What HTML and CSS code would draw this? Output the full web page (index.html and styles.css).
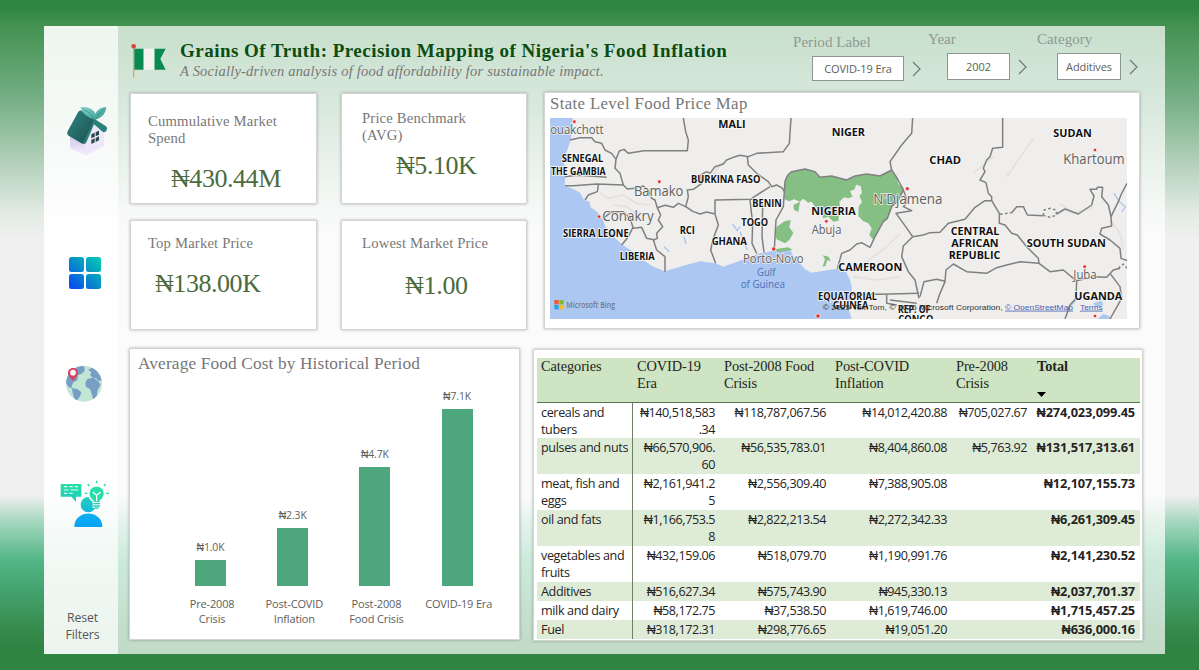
FILE: index.html
```html
<!DOCTYPE html>
<html lang="en">
<head>
<meta charset="utf-8">
<title>Grains Of Truth</title>
<link rel="stylesheet" href="styles.css">
</head>
<body>
<div class="panel">
  <nav class="sidebar">
    <svg class="ico-house" width="42" height="52" viewBox="0 0 126 156">
      <defs>
        <linearGradient id="roof" x1="0" y1="0" x2="1" y2="1"><stop offset="0" stop-color="#2f8680"/><stop offset="1" stop-color="#1b4f50"/></linearGradient>
        <linearGradient id="wall" x1="0" y1="0" x2="0" y2="1"><stop offset="0" stop-color="#cfc4ee"/><stop offset="1" stop-color="#f6f3fc"/></linearGradient>
        <linearGradient id="leaf" x1="0" y1="0" x2="1" y2="1"><stop offset="0" stop-color="#86d3c8"/><stop offset="1" stop-color="#35998d"/></linearGradient>
      </defs>
      <path d="M12 92L60 100V152L12 130Z" fill="url(#wall)"/>
      <path d="M56 112L84 52L114 78V124L58 152Z" fill="#ece7f9"/>
      <path d="M36 22Q40 14 48 17L86 42L58 112Q54 119 46 115L8 92Q1 87 5 79Z" fill="url(#roof)"/>
      <path d="M86 42L120 64Q126 69 122 76L118 80Q114 84 108 79L84 58L62 110Q58 119 50 116Z" fill="#2b807a"/>
      <path d="M88 44Q54 38 43 7Q76 2 88 26Q98 6 121 6Q120 34 88 44Z" fill="url(#leaf)"/>
      <path d="M50 11Q74 22 88 44Q100 20 116 10" fill="none" stroke="#2c8d83" stroke-width="2"/>
      <g fill="#27474c"><path d="M76 88l10-5v12l-10 5zM89 82l10-5v12l-10 5zM76 105l10-5v12l-10 5zM89 99l10-5v12l-10 5z"/></g>
    </svg>
    <svg class="ico-grid" width="32" height="32" viewBox="0 0 32 32">
      <defs><linearGradient id="gg" gradientUnits="userSpaceOnUse" x1="0" y1="32" x2="32" y2="0"><stop offset=".1" stop-color="#0750ee"/><stop offset=".5" stop-color="#078dc8"/><stop offset="1" stop-color="#06ccb0"/></linearGradient></defs>
      <g fill="url(#gg)"><rect width="15" height="15" rx="2.5"/><rect x="17" width="15" height="15" rx="2.5"/><rect y="17" width="15" height="15" rx="2.5"/><rect x="17" y="17" width="15" height="15" rx="2.5"/></g>
    </svg>
    <svg class="ico-globe" width="36" height="37" viewBox="0 0 108 111">
      <defs><clipPath id="gc"><circle cx="54" cy="56" r="54"/></clipPath></defs>
      <circle cx="54" cy="56" r="54" fill="#c2e5d6"/>
      <g fill="#779fc6" clip-path="url(#gc)">
        <path d="M0 30L18 10L40 4L55 4L56 18L45 28L36 30L34 46L22 52L16 66L24 72L8 66L0 54Z"/>
        <path d="M18 70L34 72L46 82L42 94L32 108L24 98L20 84Z"/>
        <path d="M66 14L78 8L92 16L104 34L108 46L98 48L90 40L80 38L72 30L76 22Z"/>
        <path d="M64 42L82 38L96 48L104 60L96 72L92 92L82 104L76 84L72 72L60 66L58 54Z"/>
      </g>
      <path d="M21 9c-10 0-15 7-15 15 0 9 9 14 15 25 6-11 15-16 15-25 0-8-5-15-15-15z" fill="#d9415f"/>
      <circle cx="21" cy="23" r="8.500" fill="#fff"/>
    </svg>
    <svg class="ico-idea" width="50" height="47" viewBox="0 0 150 141">
      <defs><linearGradient id="ig" gradientUnits="userSpaceOnUse" x1="0" y1="15" x2="0" y2="135"><stop offset="0" stop-color="#27e0a4"/><stop offset=".5" stop-color="#1bc4cb"/><stop offset=".8" stop-color="#0cabef"/><stop offset="1" stop-color="#07a4f5"/></linearGradient></defs>
      <path d="M2 12H64V50H48V65L34 50H2Z" fill="url(#ig)"/>
      <path d="M12 20H22M28 20H38M44 20H54M12 30H26M32 30H54M12 40H22M28 40H38" stroke="#dffaf1" stroke-width="3.500"/>
      <circle cx="85" cy="74" r="23" fill="url(#ig)"/>
      <path d="M43 141C43 87 127 87 127 141Z" fill="url(#ig)"/>
      <path d="M98 84V66C78 54 80 18 110 16C142 18 140 54 122 66V86Z" fill="#f8fdfb"/>
      <path d="M101 61C82 50 86 20 110 20C134 20 138 50 119 61V66H101Z" fill="#27dda8"/>
      <path d="M98 36L110 46L122 36M110 46V64" fill="none" stroke="#f2fffb" stroke-width="4"/>
      <path d="M100 71H120M100 78H120M104 84H116" stroke="#26cfb9" stroke-width="4"/>
      <path d="M110 2V10M83 12L88 18M137 12L132 18M74 40H82M138 40H147" stroke="#2bdba8" stroke-width="4"/>
    </svg>
    <div class="reset">Reset<br>Filters</div>
  </nav>

  <main class="main">
    <header class="header">
      <svg class="flag" width="36" height="36" viewBox="0 0 108 108">
        <path d="M8 10V104" stroke="#e0a466" stroke-width="4"/><circle cx="8" cy="10" r="7" fill="#d8453b"/>
        <path d="M10 17H38V80H10ZM70 17H104L88 48L104 80H70Z" fill="#0a8a50"/><path d="M38 17H70V80H38Z" fill="#f3f4f2"/>
      </svg>
      <div class="titles">
        <h1>Grains Of Truth: Precision Mapping of Nigeria's Food Inflation</h1>
        <p>A Socially-driven analysis of food affordability for sustainable impact.</p>
      </div>
      <div class="slicer s1"><span class="slabel">Period Label</span><div class="srow"><span class="box">COVID-19 Era</span><svg width="9" height="16" viewBox="0 0 9 16"><path d="M1 1L8 8L1 15"/></svg></div></div>
      <div class="slicer s2"><span class="slabel">Year</span><div class="srow"><span class="box green">2002</span><svg width="9" height="16" viewBox="0 0 9 16"><path d="M1 1L8 8L1 15"/></svg></div></div>
      <div class="slicer s3"><span class="slabel">Category</span><div class="srow"><span class="box">Additives</span><svg width="9" height="16" viewBox="0 0 9 16"><path d="M1 1L8 8L1 15"/></svg></div></div>
    </header>

    <section class="top">
      <div class="kpis">
        <div class="card kpi k1"><span class="kl">Cummulative Market<br>Spend</span><span class="kv">₦430.44M</span></div>
        <div class="card kpi k2"><span class="kl">Price Benchmark<br>(AVG)</span><span class="kv">₦5.10K</span></div>
        <div class="card kpi k3"><span class="kl">Top Market Price</span><span class="kv">₦138.00K</span></div>
        <div class="card kpi k4"><span class="kl">Lowest Market Price</span><span class="kv">₦1.00</span></div>
      </div>
      <div class="card mapcard">
        <h2>State Level Food Price Map</h2>
        <svg class="map" width="577" height="201" viewBox="30 84 1731 603">
          <rect x="30" y="84" width="1731" height="603" fill="#abc7f2"/>
          <path fill="#efeeec" d="M98 84L97 115L92 150L80 185L72 215L76 250L74 287L100 297L120 308L132 330L148 335L152 352L172 366L190 392L196 410L215 425L225 445L248 465L280 485L310 510L340 530L375 544L430 527L480 514L527 520L550 530L600 512L660 490L700 482L750 480L762 500L795 538L815 548L860 541L892 536L918 545L930 570L935 592L932 625L925 655L935 687H1761V84Z"/>
          <g fill="none" stroke="#e2e1de" stroke-width="5" stroke-linejoin="round"><path d="M180 310L205 325L250 315L290 340L330 345M220 345L260 350L300 380M550 215L520 250L560 260M960 530L1000 500L1040 470L1080 430M940 560L1010 570L1080 560M1360 200L1300 250M1640 600L1680 640M1480 145L1400 260M1560 340L1600 370L1660 350M1710 390L1740 430L1750 480"/></g>
          <g fill="none" stroke="#abc7f2" stroke-width="4"><path d="M578 402L592 422L600 410M432 440L438 462M372 470L388 485M600 425L612 455L622 480M1722 310L1738 335L1756 350M1745 365L1758 350M1590 650L1608 630"/></g>
          <path fill="#abc7f2" d="M1660 640L1685 632L1690 645L1668 652ZM1672 687L1690 672L1708 678L1712 687ZM885 570l15-8 4 10-12 8z"/>
          <path fill="#85bf84" d="M733 305L735 275Q740 255 755 245L795 237L825 245L840 262L875 258L920 270L945 258L980 252L1020 258L1055 240L1070 262L1075 282L1092 295L1075 330L1055 350L1042 385L1025 400L1000 450L988 435L995 415L985 400L968 392L955 378L956 350L966 335L958 318L966 308L962 288L948 284L944 298L930 304L938 320L925 325L912 322L898 335L900 350L895 392L880 395L865 380L850 385L842 360L825 350L815 335L805 338L790 326L780 335L762 328L748 334L733 328Z"/>
          <path fill="#85bf84" d="M710 410L735 393L752 390L748 412L760 428L748 450L735 460L710 448L705 430ZM703 478L745 472L758 480L715 486ZM848 496L866 500L872 514L862 510L856 528L848 530L855 508ZM760 345L780 335L775 365L762 360Z"/>
          <g fill="none" stroke="#808080" stroke-width="4.500" stroke-linejoin="round">
            <path d="M90 150L120 143L155 143L165 155L185 160L195 180L215 190L228 208L225 235L240 250L250 285L170 282L100 287L75 287M75 260L110 256L150 258L200 262"/>
            <path d="M228 208L238 183L252 178L265 190L312 182L442 182L445 150L437 125L430 84"/>
            <path d="M250 285L262 297L285 295L310 288L325 300L335 325L345 330L352 353L375 346L400 352L415 340L437 350L445 320L442 300L460 298L485 280L482 255L500 245L510 250L525 230L550 222L560 210L580 202L600 196L625 200L650 190L730 185L748 160L753 84"/>
            <path d="M622 200L625 225L650 250L685 275L695 290L710 285L728 295L733 305L730 350L708 390L703 478"/>
            <path d="M437 350L460 365L480 372L500 366L525 372L525 330L635 328L640 322L690 290M525 372L535 405L520 445L512 480L527 520"/>
            <path d="M352 353L362 375L355 390L368 410L350 430L352 445L340 450L350 480L375 500L375 545M175 285L172 305L145 315L135 330M190 385L215 365L250 365L270 385L280 415L305 412L320 445L345 450M280 410L265 440L245 465"/>
            <path d="M630 330L638 400L636 460L650 490M660 325L668 350L666 440L672 487"/>
            <path d="M733 305L735 275Q740 255 755 245L795 237L825 245L840 262L875 258L920 270L945 258L980 252L1020 258L1055 240L1070 262L1090 300L1075 330L1055 350L1042 385L1030 395L1005 440L990 472L965 458L950 462L930 480L905 490L892 536"/>
            <path d="M1118 84L1115 130L1085 165L1050 215L1055 240M1090 300L1103 335L1090 350L1115 362L1068 370L1090 400L1118 440L1090 468L1085 500L1105 545L1125 570L1137 625M1137 610L1050 612L930 614M1118 440L1150 435L1170 428L1200 427L1225 400L1275 388L1305 352L1335 332L1355 332L1378 370L1378 400L1395 405L1415 430L1432 435L1460 470L1495 505L1497 520L1440 515L1400 525L1370 533L1340 550L1280 545L1240 522L1218 540L1215 575L1200 610L1190 640M1140 620L1152 575L1190 568L1215 574M1040 615V640L1070 645M1050 630L1130 640"/>
            <path d="M1388 84V172L1358 175L1350 200L1340 210L1330 235L1335 245L1320 270L1338 278L1345 310L1355 320V332M1415 368L1430 350L1450 350L1462 375L1510 377M1550 372L1575 357L1615 372L1655 345L1662 318L1650 298L1670 298L1672 292H1688L1685 320L1705 345L1713 380L1715 408L1685 415L1680 432L1710 450L1740 475L1743 505L1761 512"/>
            <path d="M1497 520L1530 545L1570 540L1600 565L1610 572L1660 560L1700 562L1720 540L1740 535M1610 572L1608 625L1590 645L1575 687M1710 550L1740 590L1745 625L1710 687M1713 380L1735 335L1745 310L1761 280"/>
            <path stroke-dasharray="8 7" d="M1380 373L1415 368M1510 377L1512 360L1530 355L1548 360L1550 375L1530 382L1512 377M1735 535L1750 522L1761 535"/>
          </g>
          <g fill="#e03030" stroke="#fff" stroke-width="2"><circle cx="103" cy="95" r="5.500"/><circle cx="358" cy="275" r="5.500"/><circle cx="177" cy="380" r="5.500"/><circle cx="859" cy="394" r="5.500"/><circle cx="701" cy="477" r="6.500"/><circle cx="1102" cy="296" r="6"/><circle cx="1665" cy="180" r="5.500"/><circle cx="1634" cy="530" r="5.500"/><circle cx="834" cy="678" r="6.500"/><circle cx="1665" cy="678" r="5.500"/></g>
          <g class="city">
            <text x="22" y="132" textLength="169" lengthAdjust="spacingAndGlyphs">louakchott</text><text x="282" y="318" textLength="148" lengthAdjust="spacingAndGlyphs" font-size="41">Bamako</text><text x="187" y="393" textLength="154" lengthAdjust="spacingAndGlyphs" font-size="41">Conakry</text><text x="815" y="432" textLength="89" lengthAdjust="spacingAndGlyphs">Abuja</text><text x="609" y="518" textLength="182" lengthAdjust="spacingAndGlyphs">Porto-Novo</text><text x="1000" y="342" textLength="207" lengthAdjust="spacingAndGlyphs" font-size="41">N'Djamena</text><text x="1570" y="223" textLength="184" lengthAdjust="spacingAndGlyphs" font-size="41">Khartoum</text><text x="1600" y="568" textLength="70" lengthAdjust="spacingAndGlyphs">Juba</text>
          </g>
          <g class="gulf"><text x="651" y="559" textLength="55" lengthAdjust="spacingAndGlyphs">Gulf</text><text x="602" y="593" textLength="133" lengthAdjust="spacingAndGlyphs">of Guinea</text></g>
          <g class="country">
            <text x="65" y="215" textLength="125" lengthAdjust="spacingAndGlyphs" font-size="31">SENEGAL</text><text x="33" y="254" textLength="164" lengthAdjust="spacingAndGlyphs" font-size="30">THE GAMBIA</text><text x="69" y="442" textLength="197" lengthAdjust="spacingAndGlyphs" font-size="32">SIERRA LEONE</text><text x="239" y="510" textLength="105" lengthAdjust="spacingAndGlyphs" font-size="32">LIBERIA</text><text x="419" y="432" textLength="46" lengthAdjust="spacingAndGlyphs" font-size="32">RCI</text><text x="515" y="465" textLength="106" lengthAdjust="spacingAndGlyphs" font-size="32">GHANA</text><text x="535" y="113" textLength="82" lengthAdjust="spacingAndGlyphs">MALI</text><text x="453" y="279" textLength="208" lengthAdjust="spacingAndGlyphs" font-size="31">BURKINA FASO</text><text x="637" y="351" textLength="88" lengthAdjust="spacingAndGlyphs" font-size="31">BENIN</text><text x="604" y="408" textLength="80" lengthAdjust="spacingAndGlyphs" font-size="31">TOGO</text><text x="875" y="137" textLength="100" lengthAdjust="spacingAndGlyphs">NIGER</text><text x="814" y="375" textLength="133" lengthAdjust="spacingAndGlyphs">NIGERIA</text><text x="1168" y="221" textLength="95" lengthAdjust="spacingAndGlyphs">CHAD</text><text x="895" y="544" textLength="192" lengthAdjust="spacingAndGlyphs">CAMEROON</text><text x="834" y="630" textLength="177" lengthAdjust="spacingAndGlyphs" font-size="31">EQUATORIAL</text><text x="878" y="658" textLength="107" lengthAdjust="spacingAndGlyphs" font-size="30">GUINEA</text><text x="1074" y="669" textLength="97" lengthAdjust="spacingAndGlyphs" font-size="31">REP. OF</text><text x="1075" y="698" textLength="105" lengthAdjust="spacingAndGlyphs" font-size="31">CONGO</text><text x="1540" y="141" textLength="115" lengthAdjust="spacingAndGlyphs">SUDAN</text><text x="1232" y="435" textLength="146" lengthAdjust="spacingAndGlyphs">CENTRAL</text><text x="1234" y="471" textLength="142" lengthAdjust="spacingAndGlyphs">AFRICAN</text><text x="1226" y="507" textLength="155" lengthAdjust="spacingAndGlyphs">REPUBLIC</text><text x="1460" y="471" textLength="238" lengthAdjust="spacingAndGlyphs">SOUTH SUDAN</text><text x="1603" y="629" textLength="144" lengthAdjust="spacingAndGlyphs">UGANDA</text>
          </g>
          <path d="M43 630h13v13h-13z" fill="#f1592a"/><path d="M58 630h13v13h-13z" fill="#80bb32"/><path d="M43 645h13v13h-13z" fill="#20a5e8"/><path d="M58 645h13v13h-13z" fill="#fbb924"/>
          <text class="bing" x="79" y="653" textLength="146" lengthAdjust="spacingAndGlyphs">Microsoft Bing</text>
          <g class="copy"><text x="848" y="659" textLength="540" lengthAdjust="spacingAndGlyphs">© 2025 TomTom, © 2025 Microsoft Corporation,</text><text class="lnk" x="1395" y="659" textLength="204" lengthAdjust="spacingAndGlyphs">© OpenStreetMap</text><text class="lnk" x="1620" y="659" textLength="68" lengthAdjust="spacingAndGlyphs">Terms</text></g>
        </svg>
      </div>
    </section>

    <section class="bottom">
      <div class="card chart">
        <h2>Average Food Cost by Historical Period</h2>
        <div class="bars">
          <div class="col"><span class="val">₦1.0K</span><div class="bar" style="height:26px"></div></div>
          <div class="col"><span class="val">₦2.3K</span><div class="bar" style="height:58px"></div></div>
          <div class="col"><span class="val">₦4.7K</span><div class="bar" style="height:119px"></div></div>
          <div class="col"><span class="val">₦7.1K</span><div class="bar" style="height:177px"></div></div>
        </div>
        <div class="cats"><span>Pre-2008<br>Crisis</span><span>Post-COVID<br>Inflation</span><span>Post-2008<br>Food Crisis</span><span>COVID-19 Era</span></div>
      </div>
      <div class="card tablecard">
        <table>
          <colgroup><col class="c0"><col class="c1"><col class="c2"><col class="c3"><col class="c4"><col class="c5"></colgroup>
          <thead><tr><th>Categories</th><th>COVID-19<br>Era</th><th>Post-2008 Food<br>Crisis</th><th>Post-COVID<br>Inflation</th><th>Pre-2008<br>Crisis</th><th class="tot">Total<svg class="sort" width="9" height="5" viewBox="0 0 9 5"><path d="M0 0H9L4.500 5Z"/></svg></th></tr></thead>
          <tbody>
            <tr class="two"><td>cereals and<br>tubers</td><td>₦140,518,583<br>.34</td><td>₦118,787,067.56</td><td>₦14,012,420.88</td><td>₦705,027.67</td><td>₦274,023,099.45</td></tr>
            <tr class="two"><td>pulses and nuts</td><td>₦66,570,906.<br>60</td><td>₦56,535,783.01</td><td>₦8,404,860.08</td><td>₦5,763.92</td><td>₦131,517,313.61</td></tr>
            <tr class="two"><td>meat, fish and<br>eggs</td><td>₦2,161,941.2<br>5</td><td>₦2,556,309.40</td><td>₦7,388,905.08</td><td></td><td>₦12,107,155.73</td></tr>
            <tr class="two"><td>oil and fats</td><td>₦1,166,753.5<br>8</td><td>₦2,822,213.54</td><td>₦2,272,342.33</td><td></td><td>₦6,261,309.45</td></tr>
            <tr class="two"><td>vegetables and<br>fruits</td><td>₦432,159.06</td><td>₦518,079.70</td><td>₦1,190,991.76</td><td></td><td>₦2,141,230.52</td></tr>
            <tr><td>Additives</td><td>₦516,627.34</td><td>₦575,743.90</td><td>₦945,330.13</td><td></td><td>₦2,037,701.37</td></tr>
            <tr><td>milk and dairy</td><td>₦58,172.75</td><td>₦37,538.50</td><td>₦1,619,746.00</td><td></td><td>₦1,715,457.25</td></tr>
            <tr><td>Fuel</td><td>₦318,172.31</td><td>₦298,776.65</td><td>₦19,051.20</td><td></td><td>₦636,000.16</td></tr>
          </tbody>
        </table>
      </div>
    </section>
  </main>
</div>
</body>
</html>
```
FILE: styles.css
```css
* { box-sizing: border-box; }
body {
  margin: 0; width: 1199px; height: 670px; overflow: hidden;
  padding: 26px 34px 16px 44px;
  font-family: "Open Sans", sans-serif; color: #252423;
  background: linear-gradient(180deg, #2f8542 0, #2f8542 8px, #459353 28px, #72ad82 95px, #e4ece5 215px, #f0f0f0 240px, #f0f0f0 495px, #a5d7bf 522px, #52b686 560px, #45a36f 590px, #35894a 632px, #2f8442 650px);
}
h1, h2, p { margin: 0; font-weight: 400; }
svg { display: block; flex: none; }
.panel { display: flex; height: 628px; background: rgba(255,255,255,.71); }
.sidebar { width: 74px; background: rgba(255,255,255,.7); display: flex; flex-direction: column; align-items: center; }
.ico-house { margin: 79px 0 0 12px; }
.ico-grid { margin: 100px 0 0 8px; }
.ico-globe { margin: 76px 0 0 5px; }
.ico-idea { margin: 78px 0 0 7px; }
.reset { margin-top: 82px; font-size: 12.3px; line-height: 17px; text-align: center; color: #555; padding-left: 3px; letter-spacing: -.1px; }

.main { flex: 1; display: flex; flex-direction: column; }
.header { height: 66px; display: flex; align-items: flex-start; padding-left: 13px; }
.flag { margin-top: 17px; }
.titles { flex: none; width: 626px; padding: 15px 0 0 13px; font-family: "Liberation Serif", serif; white-space: nowrap; }
h1 { font-size: 19px; line-height: 20px; font-weight: 700; color: #0b4d10; letter-spacing: .485px; }
.titles p { font-size: 14.5px; line-height: 20px; font-style: italic; color: #777; letter-spacing: .21px; }
.slicer { flex: none; display: flex; flex-direction: column; white-space: nowrap; }
.slabel { font: 15px/16px "Liberation Serif", serif; color: #8d9a90; letter-spacing: .05px; }
.srow { display: flex; align-items: center; gap: 8px; }
.srow path { fill: none; stroke: #6f7a72; stroke-width: 1.2; }
.box { background: #fff; border: 1px solid #8f9691; height: 25px; line-height: 23px; text-align: center; font-size: 11px; color: #605e5c; }
.green { color: #4b6b40; }
.s1 { width: 135px; padding-top: 8px; }
.s1 .srow { padding: 6px 0 0 19px; } .s1 .box { width: 92px; letter-spacing: -.1px; }
.s2 { width: 109px; padding-top: 5px; }
.s2 .srow { padding: 6px 0 0 19px; } .s2 .box { width: 63px; height: 27px; line-height: 25px; }
.s3 { padding-top: 5px; }
.s3 .srow { padding: 6px 0 0 20px; } .s3 .box { width: 64px; height: 27px; line-height: 25px; letter-spacing: -.1px; }

.card { background: #fff; border: 1px solid #d3d5d3; box-shadow: 0 0 3px rgba(0,0,0,.28); }
.top { display: flex; padding-left: 12px; height: 256px; gap: 17px; }
.kpis { display: grid; grid-template-columns: 187px 186px; grid-template-rows: 111px 110px; column-gap: 24px; row-gap: 16px; padding-top: 1px; }
.kpi { display: flex; flex-direction: column; font-family: "Liberation Serif", serif; white-space: nowrap; }
.kl { font-size: 14.7px; line-height: 17px; color: #777; letter-spacing: .16px; }
.kv { font-size: 26px; line-height: 30px; color: #4c6b3c; letter-spacing: -.45px; }
.k1 { padding: 19px 0 0 17px; } .k1 .kv { padding: 17px 0 0 23px; }
.k2 { padding: 16px 0 0 20px; } .k2 .kv { padding: 7px 0 0 34px; }
.k3 { padding: 14px 0 0 17px; } .k3 .kv { padding: 17px 0 0 7px; }
.k4 { padding: 14px 0 0 20px; } .k4 .kv { padding: 19px 0 0 43px; letter-spacing: -.3px; }
.mapcard { width: 596px; height: 237px; padding-left: 5px; }
h2 { font: 17.3px/25px "Liberation Serif", serif; color: #777; white-space: nowrap; letter-spacing: .14px; }
.mapcard h2 { padding-top: 0; font-size: 16.8px; line-height: 22px; height: 25px; letter-spacing: .36px; }
.map text { font-family: "Open Sans", sans-serif; }
.city { font-size: 37px; fill: #5f5f5f; paint-order: stroke; stroke: #f4f4f2; stroke-width: 4px; }
.gulf { font-size: 34px; fill: #4b71b8; }
.country { font-size: 34px; font-weight: 700; fill: #111; paint-order: stroke; stroke: #fafafa; stroke-width: 5px; }
.map .bing { font-size: 24px; font-weight: 600; fill: #737b85; }
.map .copy text { font-family: "Liberation Sans", sans-serif; font-size: 24px; fill: #333; }
.map .copy .lnk { fill: #3f5fb8; text-decoration: underline; }

.bottom { display: flex; align-items: flex-start; padding-left: 11px; gap: 13px; }
.chart { width: 391px; height: 292px; padding-left: 8px; display: flex; flex-direction: column; }
.chart h2 { padding-top: 2px; height: 28px; }
.bars { height: 209px; display: flex; align-items: flex-end; padding-left: 57px; gap: 51.200px; }
.col { width: 31px; display: flex; flex-direction: column; align-items: center; }
.bar { width: 31px; background: #4ea67d; }
.val { font-size: 10.4px; line-height: 14px; margin-bottom: 6px; color: #605e5c; letter-spacing: -.1px; white-space: nowrap; }
.cats { display: flex; padding: 10px 0 0 33px; }
.cats span { width: 82.200px; text-align: center; font-size: 11px; line-height: 15px; color: #605e5c; white-space: nowrap; letter-spacing: -.15px; }
.tablecard { width: 610px; height: 292px; margin-top: 1px; padding: 8px 0 0 3px; overflow: hidden; }
table { width: 603px; table-layout: fixed; border-collapse: collapse; }
.c0 { width: 95px; } .c1 { width: 87px; } .c2 { width: 111px; } .c3 { width: 121px; } .c4 { width: 80px; } .c5 { width: 109px; }
th { height: 44px; padding: 0 0 0 5px; vertical-align: top; text-align: left; font: 14.4px/17px "Liberation Serif", serif; background: #cee4c2; border-bottom: 1px solid #54774a; white-space: nowrap; letter-spacing: -.1px; }
th:first-child { padding-left: 4px; }
th.tot { font-weight: 700; padding-left: 6px; }
.sort { margin-top: 17px; }
td { height: 19px; padding: 1px 4px 0 0; vertical-align: top; font-size: 12.6px; line-height: 17px; text-align: right; white-space: nowrap; letter-spacing: -.45px; }
.two td { height: 36px; }
td:first-child { text-align: left; padding-left: 4px; border-right: 1px solid #6f8269; padding-right: 0; letter-spacing: -.37px; }
td:last-child { font-weight: 700; padding-right: 5px; font-size: 12.8px; letter-spacing: -.15px; }
tbody tr:nth-child(even) { background: #deecd7; }
```
